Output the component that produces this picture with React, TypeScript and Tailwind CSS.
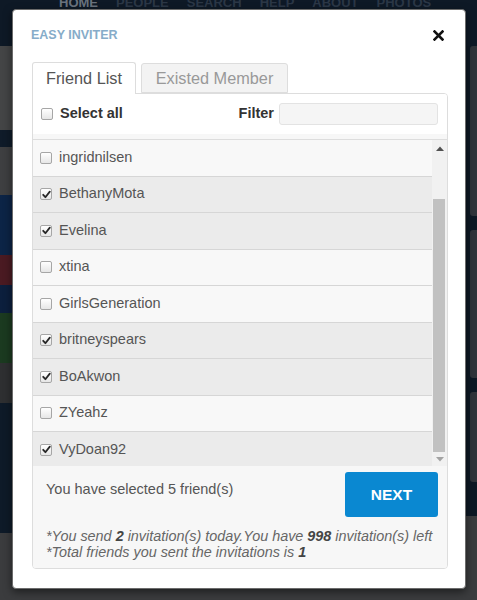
import React from "react";

type Friend = { name: string; checked: boolean };

const friends: Friend[] = [
  { name: "ingridnilsen", checked: false },
  { name: "BethanyMota", checked: true },
  { name: "Evelina", checked: true },
  { name: "xtina", checked: false },
  { name: "GirlsGeneration", checked: false },
  { name: "britneyspears", checked: true },
  { name: "BoAkwon", checked: true },
  { name: "ZYeahz", checked: false },
  { name: "VyDoan92", checked: true },
];

function Box({ checked }: { checked: boolean }) {
  return (
    <span className="flex h-[12px] w-[12px] shrink-0 items-center justify-center rounded-[2px] border border-[#a6a6a6] bg-gradient-to-b from-[#ffffff] to-[#e6e6e6]">
      {checked && (
        <svg width="9" height="9" viewBox="0 0 9 9">
          <path d="M1.2 4.8 L3.4 7.2 L7.8 1.6" fill="none" stroke="#262626" strokeWidth="1.8" strokeLinecap="round" strokeLinejoin="round" />
        </svg>
      )}
    </span>
  );
}

export default function App() {
  return (
    <div className="relative h-[600px] w-[477px] overflow-hidden bg-[#3b3c3e] font-['Liberation_Sans',Arial,sans-serif]">
      {/* dimmed page behind the modal */}
      <div className="absolute inset-0 flex flex-col">
        <div className="relative h-[46px] bg-[#0e1926]">
          <div className="flex gap-[18px] pl-[59px] pt-0 text-[13px] font-bold leading-none text-[#2b3746] -mt-[4px]">
            <span className="text-[#6a737e]">HOME</span>
            <span>PEOPLE</span>
            <span>SEARCH</span>
            <span>HELP</span>
            <span>ABOUT</span>
            <span>PHOTOS</span>
          </div>
        </div>
        <div className="flex flex-1">
          <div className="flex w-[14px] flex-col">
            <div className="h-[84px] bg-[#444546]" />
            <div className="h-[17px] bg-[#0f1b29]" />
            <div className="h-[48px] bg-[#3e3f41]" />
            <div className="h-[60px] bg-[#0c2446]" />
            <div className="h-[30px] bg-[#4a1a22]" />
            <div className="h-[28px] bg-[#0c1f3d]" />
            <div className="h-[50px] bg-[#1b3a20]" />
            <div className="h-[40px] bg-[#2e2f31]" />
            <div className="h-[130px] bg-[#0e1a28]" />
            <div className="flex-1 bg-[#3b3c3e]" />
          </div>
          <div className="flex-1" />
          <div className="flex w-[12px] flex-col">
            <div className="flex h-[470px] flex-col gap-[14px] bg-[#0d1824] pl-[5px] pt-[0px]">
              <div className="h-[170px] rounded-l-[3px] bg-[#30343a]" />
              <div className="h-[148px] rounded-l-[3px] bg-[#30343a]" />
              <div className="h-[90px] rounded-l-[3px] bg-[#30343a]" />
            </div>
            <div className="flex-1 bg-[#3b3c3e]" />
          </div>
        </div>
      </div>

      {/* modal */}
      <div className="absolute left-[12px] top-[9px] flex h-[580px] w-[454px] flex-col rounded-[4px] border border-[#6b6b6b] bg-white px-[18px] shadow-[0_3px_9px_rgba(0,0,0,0.5)]">
        <div className="flex h-[14px] items-center justify-between pt-0 mt-[18px]">
          <span className="text-[12.5px] font-bold leading-none text-[#86acc9]">EASY INVITER</span>
          <svg width="11" height="11" viewBox="0 0 11 11" className="mr-[3px]">
            <path d="M1.5 1.5 L9.5 9.5 M9.5 1.5 L1.5 9.5" stroke="#111" strokeWidth="2.6" strokeLinecap="square" />
          </svg>
        </div>

        <div className="ml-[1px] mt-[20px] flex items-end gap-[5px]">
          <div className="relative z-10 -mb-px flex h-[32px] w-[104px] items-center justify-center rounded-t-[3px] border border-b-0 border-[#dddddd] bg-white text-[16.3px] text-[#555555]">
            Friend List
          </div>
          <div className="flex h-[30px] w-[147px] items-center justify-center rounded-t-[3px] border border-[#dddddd] bg-[#f3f3f3] text-[16.3px] text-[#999999]">
            Existed Member
          </div>
        </div>

        <div className="ml-[1px] flex w-[416px] flex-col overflow-hidden rounded-b-[4px] rounded-tr-[4px] border border-[#dddddd]">
          <div className="flex h-[40px] items-center bg-white pl-[8px] pr-[9px]">
            <Box checked={false} />
            <span className="ml-[7px] text-[14.5px] font-bold text-[#333333]">Select all</span>
            <span className="ml-auto mr-[5px] text-[14.5px] font-bold text-[#333333]">Filter</span>
            <div className="h-[22px] w-[159px] rounded-[3px] border border-[#e3e3e3] bg-[#f5f5f5]" />
          </div>
          <div className="h-[5px] bg-[#f7f7f7]" />
          <div className="flex h-[327px] border-t border-[#dddddd]">
            <div className="flex w-[399px] flex-col overflow-hidden">
              {friends.map((f) => (
                <div
                  key={f.name}
                  className={`flex h-[36.5px] shrink-0 items-center border-b border-[#d6d6d6] pl-[7px] ${f.checked ? "bg-[#ebebeb]" : "bg-[#f8f8f8]"}`}
                >
                  <Box checked={f.checked} />
                  <span className="ml-[7px] text-[14.5px] text-[#555555]">{f.name}</span>
                </div>
              ))}
            </div>
            <div className="flex w-[15px] flex-col bg-[#f1f1f1]">
              <div className="flex h-[16px] items-center justify-center">
                <svg width="8" height="5" viewBox="0 0 8 5">
                  <path d="M0 5 L4 0.5 L8 5 Z" fill="#505050" />
                </svg>
              </div>
              <div className="mt-[43px] ml-[1px] h-[253px] w-[12px] bg-[#c1c1c1]" />
              <div className="flex flex-1 items-center justify-center">
                <svg width="8" height="5" viewBox="0 0 8 5">
                  <path d="M0 0 L4 4.5 L8 0 Z" fill="#a3a3a3" />
                </svg>
              </div>
            </div>
          </div>
          <div className="flex flex-col bg-[#f7f7f7] pb-[8px] pl-[13px] pr-[9px]">
            <div className="flex items-start justify-between">
              <span className="mt-[13px] text-[14.5px] leading-[20px] text-[#555555]">You have selected 5 friend(s)</span>
              <div className="mt-[6px] flex h-[45px] w-[93px] items-center justify-center rounded-[3px] bg-[#0a88d1] text-[15.5px] font-bold text-white">
                NEXT
              </div>
            </div>
            <div className="mt-[11px] whitespace-nowrap text-[14.4px] italic leading-[16px] text-[#666666]">
              <div>
                *You send <b className="text-[#444444]">2</b> invitation(s) today.You have <b className="text-[#444444]">998</b> invitation(s) left
              </div>
              <div>
                *Total friends you sent the invitations is <b className="text-[#444444]">1</b>
              </div>
            </div>
          </div>
        </div>
      </div>
    </div>
  );
}
